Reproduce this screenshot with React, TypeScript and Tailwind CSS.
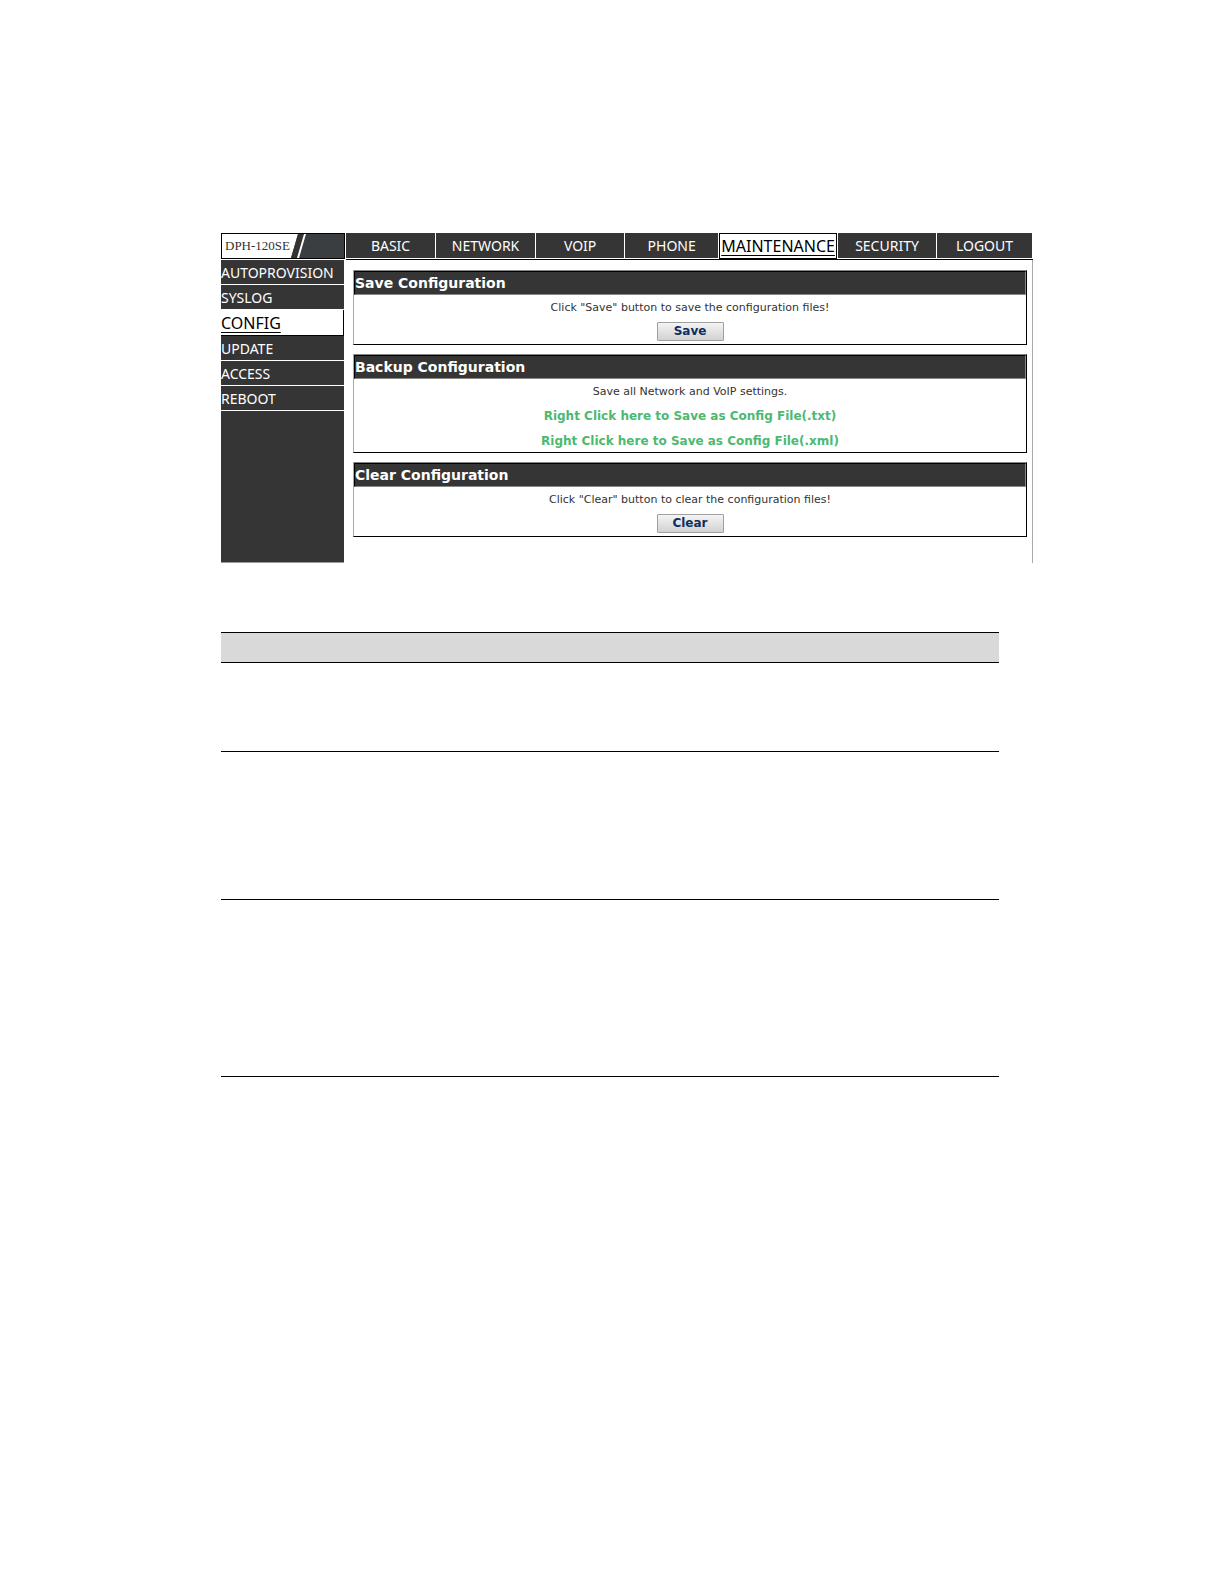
import React, { useState } from "react";
import clsx from "clsx";

type Tab = { label: string; width: string };

// Top navigation, each tab with its share of the bar
const tabs: Tab[] = [
  { label: "BASIC", width: "flex-[90]" },
  { label: "NETWORK", width: "flex-[100]" },
  { label: "VOIP", width: "flex-[89]" },
  { label: "PHONE", width: "flex-[94]" },
  { label: "MAINTENANCE", width: "flex-[117]" },
  { label: "SECURITY", width: "flex-[99]" },
  { label: "LOGOUT", width: "flex-[96]" },
];

const menuItems = [
  "AUTOPROVISION",
  "SYSLOG",
  "CONFIG",
  "UPDATE",
  "ACCESS",
  "REBOOT",
];

// Row heights of the description table
const rowHeights = ["h-[89px]", "h-[148px]", "h-[177px]"];

function Logo() {
  return (
    <div className="relative h-[26px] w-[124px] shrink-0 border border-black bg-[#3b3e41]">
      <svg
        className="block h-full w-full"
        viewBox="0 0 122 24"
        preserveAspectRatio="none"
      >
        <path d="M0 0H76L69 24H0Z" fill="#fff" />
        <path d="M76 0H82L75 24H69Z" fill="#333" />
        <path d="M82 0H84L77 24H75Z" fill="#fff" />
      </svg>
      <span className="absolute left-[3px] top-0 font-['Liberation_Serif',serif] text-[13px] leading-[24px] text-[#333]">
        DPH-120SE
      </span>
    </div>
  );
}

function Section({
  title,
  children,
}: {
  title: string;
  children: React.ReactNode;
}) {
  return (
    <section className="border border-t-[#888] border-r-black border-b-black border-l-[#aaa]">
      <h2 className="h-6 border border-t-black border-r-[#888] border-b-[#888] border-l-black bg-[#353535] text-[14px] leading-[22px] font-bold text-white">
        {title}
      </h2>
      <div className="flex flex-col items-center text-[11px] leading-[25px] text-[#333]">
        {children}
      </div>
    </section>
  );
}

function ActionButton({ label }: { label: string }) {
  return (
    <button
      type="button"
      className="mt-[2px] mb-[3px] h-[19px] w-[67px] rounded-[1px] border border-[#a0a0a0] bg-linear-to-b from-[#f4f4f4] to-[#d2d2d2] text-[12px] leading-[17px] font-bold text-[#0f2f5c]"
    >
      {label}
    </button>
  );
}

function App() {
  const [activeTab, setActiveTab] = useState("MAINTENANCE");
  const [activeItem, setActiveItem] = useState("CONFIG");

  return (
    <div className="min-h-screen bg-white pt-[233px] pr-[191px] pb-10 pl-[221px] font-['DejaVu_Sans',sans-serif]">
      {/* Header */}
      <header className="flex gap-px">
        <Logo />
        <nav className="flex h-[27px] flex-1 border-b border-black font-['Noto_Sans',sans-serif]">
          {tabs.map((tab) => (
            <a
              key={tab.label}
              href="#"
              onClick={() => setActiveTab(tab.label)}
              className={clsx(
                "flex h-[26px] items-center justify-center",
                tab.width,
                tab.label === activeTab
                  ? "mr-px border border-black bg-white text-[16px] text-black underline underline-offset-3"
                  : "border-r border-b border-white bg-[#353535] text-[14px] text-white"
              )}
            >
              {tab.label}
            </a>
          ))}
        </nav>
      </header>

      {/* Sidebar and content */}
      <div className="flex">
        <aside className="w-[123px] shrink-0 border-b border-[#999] bg-[#353535] font-['Noto_Sans',sans-serif]">
          {menuItems.map((item) => (
            <a
              key={item}
              href="#"
              onClick={() => setActiveItem(item)}
              className={clsx(
                "block border-b",
                item === activeItem
                  ? "h-[26px] border-r border-black bg-white text-[16px] leading-[26px] text-black underline underline-offset-3"
                  : "h-[25px] border-white text-[14px] leading-[25px] text-white"
              )}
            >
              {item}
            </a>
          ))}
        </aside>

        <main className="flex h-[303px] flex-1 flex-col gap-[9px] border-r border-[#aaa] pt-[10px] pr-[5px] pl-[9px]">
          <Section title="Save Configuration">
            <p>Click "Save" button to save the configuration files!</p>
            <ActionButton label="Save" />
          </Section>
          <Section title="Backup Configuration">
            <p>Save all Network and VoIP settings.</p>
            <a href="#" className="text-[12px] font-bold text-[#4cb971]">
              Right Click here to Save as Config File(.txt)
            </a>
            <a
              href="#"
              className="h-[23px] text-[12px] font-bold text-[#4cb971]"
            >
              Right Click here to Save as Config File(.xml)
            </a>
          </Section>
          <Section title="Clear Configuration">
            <p>Click "Clear" button to clear the configuration files!</p>
            <ActionButton label="Clear" />
          </Section>
        </main>
      </div>

      {/* Description table */}
      <div className="pt-[69px] pr-[34px]">
        <table className="w-full border-collapse">
          <thead>
            <tr className="h-[30px] border-y border-black bg-[#d9d9d9]">
              <th />
              <th />
            </tr>
          </thead>
          <tbody>
            {rowHeights.map((height) => (
              <tr key={height} className={clsx("border-b border-black", height)}>
                <td />
                <td />
              </tr>
            ))}
          </tbody>
        </table>
      </div>
    </div>
  );
}

export default App;
